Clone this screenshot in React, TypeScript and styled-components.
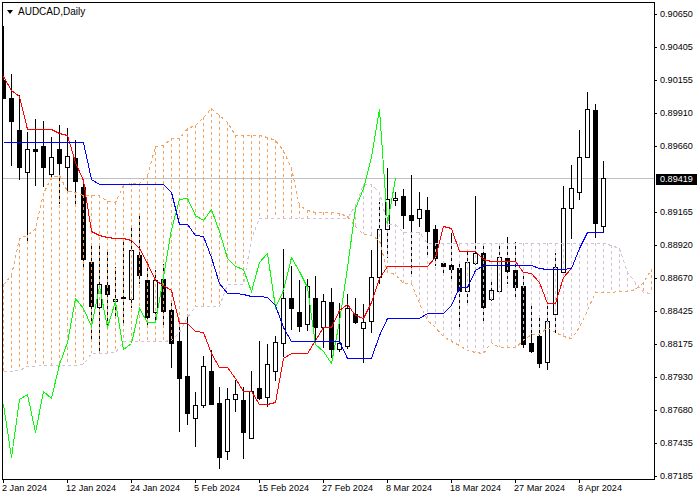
import React from "react";
import styled, { createGlobalStyle } from "styled-components";

const GlobalStyle = createGlobalStyle`
  html, body { margin: 0; padding: 0; background: #fff; }
  body { font-family: "Liberation Sans", Arial, sans-serif; color: #000; }
`;

const Page = styled.div`
  width: 700px;
  height: 500px;
  box-sizing: border-box;
  padding: 2px 0 0 2px;
  display: flex;
  align-items: flex-start;
  overflow: hidden;
`;
const ChartColumn = styled.div`
  display: flex;
  flex-direction: column;
  width: 653px;
`;
const Plot = styled.div`
  position: relative;
  width: 651px;
  height: 476px;
  border: 1px solid #000;
`;
const ChartSvg = styled.svg`
  display: block;
  width: 651px;
  height: 476px;
  shape-rendering: crispEdges;
`;
const Title = styled.div`
  position: absolute;
  top: 3px;
  left: 4px;
  display: flex;
  align-items: center;
  gap: 5px;
  font-size: 10px;
  line-height: 11px;
  white-space: nowrap;
`;
const TitleArrow = styled.span`
  width: 0;
  height: 0;
  border-left: 3.5px solid transparent;
  border-right: 3.5px solid transparent;
  border-top: 4px solid #000;
`;
const DateAxis = styled.div`
  display: flex;
  padding-left: 1px;
`;
const DateCell = styled.div`
  width: 64px;
  flex: none;
  display: flex;
  flex-direction: column;
  font-size: 9.1px;
  line-height: 11px;
  white-space: nowrap;
`;
const DateTick = styled.span`
  width: 1px;
  height: 3px;
  background: #000;
`;
const DateLabel = styled.span`
  margin: 0 0 0 -1px;
`;
const PriceAxis = styled.div`
  display: flex;
  flex-direction: column;
  padding-top: 12px;
`;
const PriceRow = styled.div`
  height: 33px;
  display: flex;
  align-items: flex-start;
`;
const PriceTick = styled.span`
  width: 2px;
  height: 1px;
  background: #000;
  margin-right: 3px;
`;
const PriceLabel = styled.span`
  font-size: 9.1px;
  line-height: 11px;
  margin-top: -5px;
`;
const BidBadge = styled.span`
  width: 37px;
  height: 11px;
  margin: -5px 0 0 1px;
  padding-left: 4px;
  background: #000;
  color: #fff;
  font-size: 9.1px;
  line-height: 11px;
`;
const Wick = styled.line`
  stroke: #000;
  stroke-width: 1;
`;
const BullBody = styled.rect`
  fill: #fff;
  stroke: #000;
  stroke-width: 1;
`;
const BearBody = styled.rect`
  fill: #000;
`;
const BidLine = styled.line`
  stroke: #c0c0c0;
  stroke-width: 1;
`;
const Trace = styled.polyline<{ $color: string; $dashed?: boolean }>`
  fill: none;
  stroke: ${(p) => p.$color};
  stroke-width: 1;
  stroke-dasharray: ${(p) => (p.$dashed ? "3 3" : "none")};
`;
const Hatch = styled.line<{ $color: string }>`
  stroke: ${(p) => p.$color};
  stroke-width: 1;
  stroke-dasharray: 3 3;
`;

type Candle = [number, number, number, number, 0 | 1];
// high, body top, body bottom, low, bullish
const candles: Candle[] = [
  [26, 80, 98, 98, 0], [74, 98, 121, 165, 0], [95, 130, 167, 179, 0], [132, 149, 172, 242, 1],
  [119, 149, 151, 185, 0], [121, 146, 167, 186, 0], [137, 157, 174, 176, 1], [125, 149, 163, 203, 0],
  [128, 156, 167, 192, 1], [140, 158, 181, 205, 0], [180, 187, 259, 267, 0], [245, 262, 306, 340, 0],
  [245, 284, 307, 352, 1], [250, 285, 294, 326, 0], [267, 299, 301, 318, 1], [238, 297, 298, 323, 0],
  [227, 250, 299, 307, 1], [215, 255, 275, 283, 0], [260, 280, 317, 327, 0], [270, 280, 312, 320, 1],
  [264, 279, 311, 327, 0], [300, 310, 343, 367, 0], [322, 341, 378, 431, 0], [317, 376, 413, 424, 0],
  [392, 405, 418, 446, 1], [356, 366, 405, 407, 1], [350, 371, 404, 404, 0], [387, 403, 457, 468, 0],
  [388, 399, 451, 459, 1], [380, 394, 399, 411, 1], [387, 400, 432, 458, 0], [371, 391, 438, 438, 1],
  [341, 388, 398, 399, 0], [344, 364, 397, 406, 1], [336, 342, 371, 380, 1], [249, 298, 343, 356, 1],
  [266, 298, 308, 329, 0], [280, 312, 326, 331, 0], [279, 286, 324, 330, 1], [276, 298, 327, 340, 0],
  [294, 301, 327, 347, 1], [288, 302, 349, 357, 0], [303, 343, 349, 351, 1], [294, 308, 346, 348, 1],
  [298, 314, 322, 323, 0], [304, 322, 328, 362, 1], [250, 277, 321, 332, 1], [202, 229, 277, 283, 1],
  [168, 199, 229, 257, 1], [192, 198, 200, 205, 1], [189, 196, 215, 228, 0], [175, 215, 220, 275, 0],
  [192, 209, 218, 226, 1], [197, 210, 231, 254, 0], [225, 229, 258, 265, 0], [262, 263, 266, 273, 0],
  [233, 265, 269, 280, 0], [262, 268, 291, 327, 0], [250, 262, 291, 305, 1], [196, 253, 263, 264, 1],
  [243, 253, 307, 322, 0], [282, 290, 299, 300, 1], [243, 257, 291, 291, 1], [237, 258, 271, 283, 0],
  [242, 270, 287, 297, 0], [272, 286, 344, 347, 0], [305, 343, 351, 352, 0], [317, 336, 363, 367, 0],
  [303, 321, 362, 369, 1], [253, 267, 314, 332, 1], [186, 208, 272, 273, 1], [165, 188, 208, 238, 1],
  [130, 157, 192, 199, 1], [92, 109, 157, 157, 1], [104, 110, 223, 237, 0], [161, 178, 226, 231, 1],
];

const cx = (i: number) => 3 + 8 * i;

const orange = [
  284, 275, 238, 235, 228, 193, 177, 175, 191, 192, 195, 195, 195, 201, 202, 185, 183, 183, 175, 146,
  145, 138, 138, 128, 125, 117, 108, 115, 122, 135, 135, 135, 135, 137, 140, 150, 168, 205, 210, 212,
  212, 212, 213, 216, 226, 234, 235, 240, 272, 274, 283, 283, 303, 320, 327, 336, 341, 345, 350, 352,
  353, 342, 347, 347, 347, 340, 334, 334, 327, 332, 336, 338, 327, 310, 292, 292, 292, 291, 291, 289,
  282, 269,
];
const pink = [
  371, 371, 370, 366, 366, 365, 365, 365, 365, 365, 364, 353, 353, 353, 352, 341, 341, 341, 341, 341,
  341, 340, 332, 317, 306, 306, 306, 306, 284, 284, 284, 238, 218, 218, 218, 218, 218, 218, 218, 218,
  218, 218, 218, 218, 205, 184, 184, 192, 224, 224, 232, 232, 232, 243, 243, 243, 243, 243, 243, 243,
  243, 243, 243, 243, 243, 243, 243, 243, 243, 243, 243, 243, 243, 243, 243, 243, 245, 248, 272, 282,
  292, 293,
];
const blue = [
  142, 142, 142, 142, 142, 142, 142, 142, 142, 142, 142, 179, 184, 184, 184, 184, 184, 184, 184, 184,
  184, 192, 224, 224, 235, 236, 257, 283, 293, 293, 294, 296, 296, 297, 305, 327, 341, 341, 341, 341,
  341, 341, 341, 358, 358, 358, 358, 335, 318, 318, 318, 318, 318, 313, 313, 313, 305, 287, 287, 270,
  265, 265, 265, 265, 265, 265, 265, 268, 269, 269, 269, 268, 248, 232, 232, 232,
];
const red = [
  76, 90, 96, 129, 129, 129, 129, 133, 135, 162, 180, 231, 235, 237, 238, 238, 240, 248, 263, 280,
  285, 290, 323, 323, 331, 332, 353, 367, 367, 378, 391, 391, 404, 404, 402, 358, 353, 353, 353, 340,
  327, 327, 310, 304, 315, 318, 302, 278, 266, 266, 266, 266, 266, 266, 257, 226, 228, 251, 251, 251,
  259, 261, 261, 261, 261, 272, 273, 282, 303, 303, 277, 268, 248, 232, 232, 232,
];
const lagging = candles.slice(26).map((c) => (c[4] ? c[1] : c[2]));

const toPoints = (ys: number[]) => ys.map((y, i) => `${cx(i) + 0.5},${y + 0.5}`).join(" ");

const prices: { text: string; bid?: boolean }[] = [
  { text: "0.90650" }, { text: "0.90405" }, { text: "0.90155" }, { text: "0.89910" }, { text: "0.89660" },
  { text: "0.89419", bid: true }, { text: "0.89165" }, { text: "0.88920" }, { text: "0.88670" }, { text: "0.88425" },
  { text: "0.88175" }, { text: "0.87930" }, { text: "0.87680" }, { text: "0.87435" }, { text: "0.87185" },
];
const dates = [
  "2 Jan 2024", "12 Jan 2024", "24 Jan 2024", "5 Feb 2024", "15 Feb 2024",
  "27 Feb 2024", "8 Mar 2024", "18 Mar 2024", "27 Mar 2024", "8 Apr 2024",
];

export default function App() {
  return (
    <Page>
      <GlobalStyle />
      <ChartColumn>
        <Plot>
          <ChartSvg viewBox="3 3 651 476">
            <BidLine x1={3} x2={654} y1={178.5} y2={178.5} />
            {candles.map(([high, top, bottom, low, bull], i) => {
              const x = cx(i);
              return (
                <g key={i}>
                  <Wick x1={x + 0.5} x2={x + 0.5} y1={high} y2={low + 1} />
                  {bull ? (
                    <BullBody x={x - 1.5} y={top + 0.5} width={4} height={bottom - top} />
                  ) : (
                    <BearBody x={x - 2} y={top} width={5} height={bottom - top + 1} />
                  )}
                </g>
              );
            })}
            {orange.map((y, i) => (
              <Hatch
                key={i}
                $color={y < pink[i] ? "#f4a460" : "#d8bfd8"}
                x1={cx(i) + 0.5}
                x2={cx(i) + 0.5}
                y1={Math.min(y, pink[i])}
                y2={Math.max(y, pink[i])}
              />
            ))}
            <Trace $color="#f4a460" $dashed points={toPoints(orange)} />
            <Trace $color="#d8bfd8" $dashed points={toPoints(pink)} />
            <Trace $color="#00ff00" points={toPoints(lagging)} />
            <Trace $color="#ff0000" points={toPoints(red)} />
            <Trace $color="#0000ff" points={toPoints(blue)} />
          </ChartSvg>
          <Title>
            <TitleArrow />
            <span>AUDCAD,Daily</span>
          </Title>
        </Plot>
        <DateAxis>
          {dates.map((d) => (
            <DateCell key={d}>
              <DateTick />
              <DateLabel>{d}</DateLabel>
            </DateCell>
          ))}
        </DateAxis>
      </ChartColumn>
      <PriceAxis>
        {prices.map((p) => (
          <PriceRow key={p.text}>
            {p.bid ? (
              <BidBadge>{p.text}</BidBadge>
            ) : (
              <>
                <PriceTick />
                <PriceLabel>{p.text}</PriceLabel>
              </>
            )}
          </PriceRow>
        ))}
      </PriceAxis>
    </Page>
  );
}
